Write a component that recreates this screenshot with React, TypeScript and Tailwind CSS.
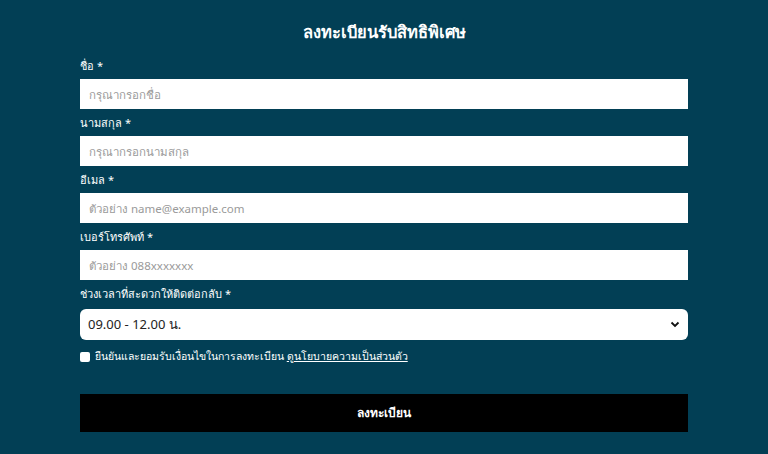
import React from "react";

function Field({ label, placeholder }: { label: string; placeholder: string }) {
  return (
    <div className="flex flex-col">
      <label className="h-[16px] text-[11px] leading-[16px] text-white mb-[5px]">
        {label} <span>*</span>
      </label>
      <input
        className="h-[30px] w-full bg-white px-[9px] text-[11.5px] text-gray-800 placeholder:text-[#9a9a9a] outline-none"
        placeholder={placeholder}
      />
    </div>
  );
}

export default function App() {
  return (
    <div
      className="w-[768px] h-[454px] bg-[#023f55] overflow-hidden"
      style={{ fontFamily: '"Noto Sans", "Liberation Sans", sans-serif' }}
    >
      <div className="w-[608px] mx-auto pt-[20px]">
        <h1 className="h-[24px] text-center text-[16.5px] leading-[24px] font-bold text-white">
          ลงทะเบียนรับสิทธิพิเศษ
        </h1>
        <div className="mt-[14px] flex flex-col gap-[6px]">
          <Field label="ชื่อ" placeholder="กรุณากรอกชื่อ" />
          <Field label="นามสกุล" placeholder="กรุณากรอกนามสกุล" />
          <Field label="อีเมล" placeholder="ตัวอย่าง name@example.com" />
          <Field label="เบอร์โทรศัพท์" placeholder="ตัวอย่าง 088xxxxxxx" />
          <div className="flex flex-col">
            <label className="h-[16px] text-[11px] leading-[16px] text-white">
              ช่วงเวลาที่สะดวกให้ติดต่อกลับ <span>*</span>
            </label>
            <div className="mt-[7px] h-[31px] bg-white rounded-[6px] flex items-center justify-between px-[8px]">
              <span className="text-[13px] text-[#222]">09.00 - 12.00 น.</span>
              <svg width="10" height="7" viewBox="0 0 10 7">
                <path d="M1.5 1.5 L5 5 L8.5 1.5" stroke="#111" strokeWidth="1.8" fill="none" />
              </svg>
            </div>
          </div>
        </div>
        <div className="mt-[10px] flex items-center h-[14px] text-[10.5px] text-white">
          <span className="w-[10px] h-[10px] bg-white rounded-[2px] mr-[5px]" />
          <span>
            ยืนยันและยอมรับเงื่อนไขในการลงทะเบียน <span className="underline">ดูนโยบายความเป็นส่วนตัว</span>
          </span>
        </div>
        <button className="mt-[30px] w-full h-[38px] bg-black text-white text-[12px] font-bold flex items-center justify-center">
          ลงทะเบียน
        </button>
      </div>
    </div>
  );
}
